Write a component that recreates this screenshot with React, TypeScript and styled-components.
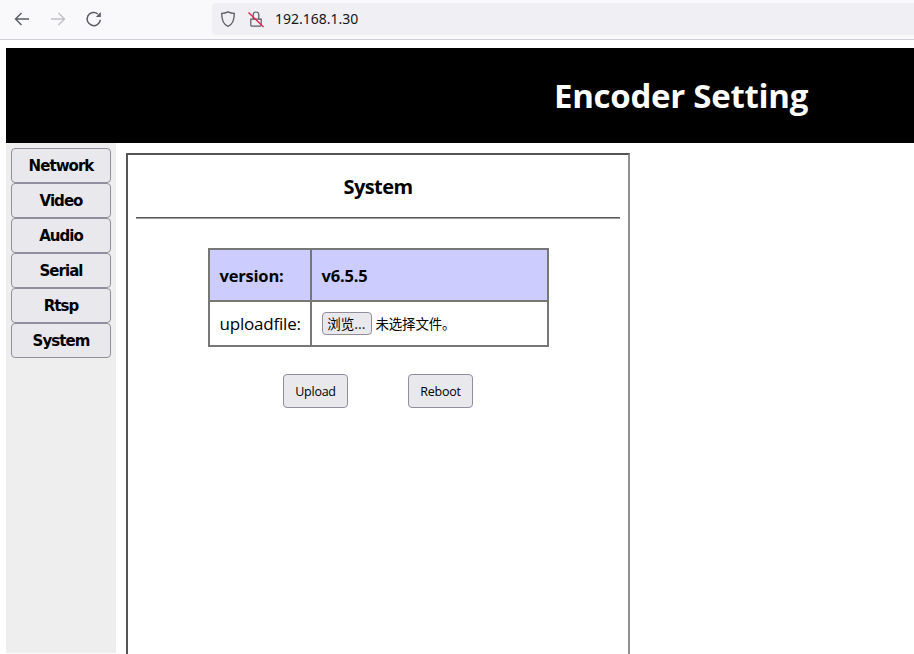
import React from "react";
import styled, { createGlobalStyle } from "styled-components";

const Global = createGlobalStyle`
  html, body { margin: 0; padding: 0; background: #fff; width: 914px; height: 654px; overflow: hidden; }
  body { font-family: "Open Sans", "Noto Sans", sans-serif; color: #000; }
`;

const Toolbar = styled.div`
  height: 39px;
  background: #f9f9fb;
  border-bottom: 1px solid #cfcfd8;
  display: flex;
  align-items: flex-start;
`;
const NavIcons = styled.div`
  display: flex;
  align-items: center;
  gap: 18px;
  padding: 10px 0 0 13px;
  width: 212px;
  box-sizing: border-box;
`;
const UrlBar = styled.div`
  flex: 1;
  height: 32px;
  margin-top: 3px;
  border-radius: 4px 0 0 4px;
  background: #f0f0f4;
  display: flex;
  align-items: center;
  padding-left: 8px;
  box-sizing: border-box;
  gap: 12px;
`;
const UrlText = styled.span`
  font-family: "Noto Sans", sans-serif;
  font-size: 14px;
  color: #15141a;
  margin-left: -1px;
  margin-top: -1px;
`;
const Page = styled.div`
  padding: 8px 0 0 6px;
`;
const Banner = styled.header`
  height: 95px;
  background: #000;
  color: #fff;
  display: flex;
  align-items: center;
  padding-left: 548px;
`;
const BannerTitle = styled.h1`
  margin: 0;
  font-family: "Open Sans", sans-serif;
  font-size: 33px;
  font-weight: 700;
  letter-spacing: -0.28px;
`;
const Body = styled.div`
  display: flex;
`;
const Sidebar = styled.nav`
  width: 110px;
  height: 510px;
  flex: none;
  background: #eeeeee;
  padding: 5px 5px 0;
  box-sizing: border-box;
  display: flex;
  flex-direction: column;
`;
const NavButton = styled.button`
  width: 100px;
  height: 35px;
  flex: none;
  box-sizing: border-box;
  background: #e9e9ed;
  border: 1px solid #8f8f9d;
  border-radius: 4px;
  font-family: "DejaVu Sans", sans-serif;
  font-size: 15px;
  font-weight: 700;
  letter-spacing: -0.95px;
  color: #000;
  padding: 1px 0 0;
`;
const Panel = styled.main`
  width: 504px;
  height: 560px;
  flex: none;
  margin: 10px 0 0 10px;
  box-sizing: border-box;
  border-style: solid;
  border-width: 2px;
  border-color: #555555 #909090 #909090 #555555;
  padding: 0 8px;
  display: flex;
  flex-direction: column;
  align-items: center;
`;
const PanelTitle = styled.h2`
  margin: 0;
  height: 62px;
  width: 100%;
  font-size: 20px;
  font-weight: 700;
  line-height: 64px;
  text-align: center;
  font-family: "Open Sans", sans-serif;
  letter-spacing: -0.6px;
`;
const Rule = styled.hr`
  width: 100%;
  height: 2px;
  margin: 0;
  border: 0;
  border-top: 1px solid #5a5a5a;
  border-bottom: 1px solid #a0a0a0;
  box-sizing: border-box;
`;
const InfoTable = styled.table`
  margin-top: 29px;
  width: 341px;
  border-collapse: collapse;
  border: 2px solid #6e6e6e;
  table-layout: fixed;
`;
const Row = styled.tr<{ $head?: boolean }>`
  height: ${(p) => (p.$head ? "52px" : "45px")};
  background: ${(p) => (p.$head ? "#ccccff" : "#fff")};
  font-weight: ${(p) => (p.$head ? 700 : 400)};
  font-size: ${(p) => (p.$head ? "16.5px" : "17px")};
`;
const Cell = styled.td`
  border: 2px solid #777;
  padding: 0 0 0 10px;
  font-family: "Open Sans", sans-serif;
  letter-spacing: -0.2px;
  box-sizing: border-box;
`;
const LabelCell = styled(Cell)`
  width: 102px;
`;
const FileWrap = styled.div`
  display: flex;
  align-items: center;
  gap: 4px;
  margin-top: -1px;
`;
const BrowseButton = styled.button`
  width: 50px;
  height: 23px;
  box-sizing: border-box;
  background: #e9e9ed;
  border: 1px solid #8f8f9d;
  border-radius: 4px;
  padding: 0;
  font-family: "Noto Sans CJK SC", sans-serif;
  font-size: 13.5px;
  color: #000;
`;
const FileText = styled.span`
  font-family: "Noto Sans CJK SC", sans-serif;
  font-size: 13.5px;
`;
const Actions = styled.div`
  margin-top: 27px;
  display: flex;
  gap: 60px;
`;
const ActionButton = styled.button`
  width: 65px;
  height: 34px;
  box-sizing: border-box;
  background: #e9e9ed;
  border: 1px solid #8f8f9d;
  border-radius: 4px;
  padding: 0;
  font-family: "Open Sans", sans-serif;
  font-size: 12.5px;
  letter-spacing: -0.25px;
  color: #000;
`;

const Icon = styled.svg`
  flex: none;
  display: block;
`;

const menu = ["Network", "Video", "Audio", "Serial", "Rtsp", "System"];

export default function App() {
  return (
    <>
      <Global />
      <Toolbar>
        <NavIcons>
          <Icon width="18" height="18" viewBox="0 0 18 18" fill="none" stroke="#5b5b66" strokeWidth="1.4">
            <path d="M16 9H2.500M8.500 3L2.500 9l6 6" />
          </Icon>
          <Icon width="18" height="18" viewBox="0 0 18 18" fill="none" stroke="#c0c0c6" strokeWidth="1.4">
            <path d="M2 9h13.500M9.500 3l6 6-6 6" />
          </Icon>
          <Icon width="18" height="18" viewBox="0 0 18 18" fill="none" stroke="#5b5b66" strokeWidth="1.5">
            <path d="M15.300 9.800A6.600 6.600 0 1 1 12.800 3.800" />
            <path d="M10.800 7h5V2z" fill="#5b5b66" stroke="none" />
          </Icon>
        </NavIcons>
        <UrlBar>
          <Icon width="16" height="18" viewBox="0 0 16 18" fill="none" stroke="#5b5b66" strokeWidth="1.3">
            <path d="M8 1.800c2 1 4 1.500 6.300 1.500 0 6.700-1.600 11.400-6.300 13-4.700-1.600-6.300-6.300-6.300-13C4 3.300 6 2.800 8 1.800z" />
          </Icon>
          <Icon width="16" height="18" viewBox="0 0 16 18" fill="none" stroke="#5b5b66" strokeWidth="1.2">
            <path d="M2.800 9.200h10.400v6a1 1 0 0 1-1 1H3.800a1 1 0 0 1-1-1z" />
            <path d="M5.200 9.200V4.800a2.800 2.800 0 0 1 5.600 0v4.400" />
            <path d="M.5 2.500l15 14.500" stroke="#e22850" strokeWidth="1.400" />
          </Icon>
          <UrlText>192.168.1.30</UrlText>
        </UrlBar>
      </Toolbar>
      <Page>
        <Banner>
          <BannerTitle>Encoder Setting</BannerTitle>
        </Banner>
        <Body>
          <Sidebar>
            {menu.map((m) => (
              <NavButton key={m}>{m}</NavButton>
            ))}
          </Sidebar>
          <Panel>
            <PanelTitle>System</PanelTitle>
            <Rule />
            <InfoTable>
              <tbody>
                <Row $head>
                  <LabelCell>version:</LabelCell>
                  <Cell>v6.5.5</Cell>
                </Row>
                <Row>
                  <LabelCell>uploadfile:</LabelCell>
                  <Cell>
                    <FileWrap>
                      <BrowseButton>浏览...</BrowseButton>
                      <FileText>未选择文件。</FileText>
                    </FileWrap>
                  </Cell>
                </Row>
              </tbody>
            </InfoTable>
            <Actions>
              <ActionButton>Upload</ActionButton>
              <ActionButton>Reboot</ActionButton>
            </Actions>
          </Panel>
        </Body>
      </Page>
    </>
  );
}
